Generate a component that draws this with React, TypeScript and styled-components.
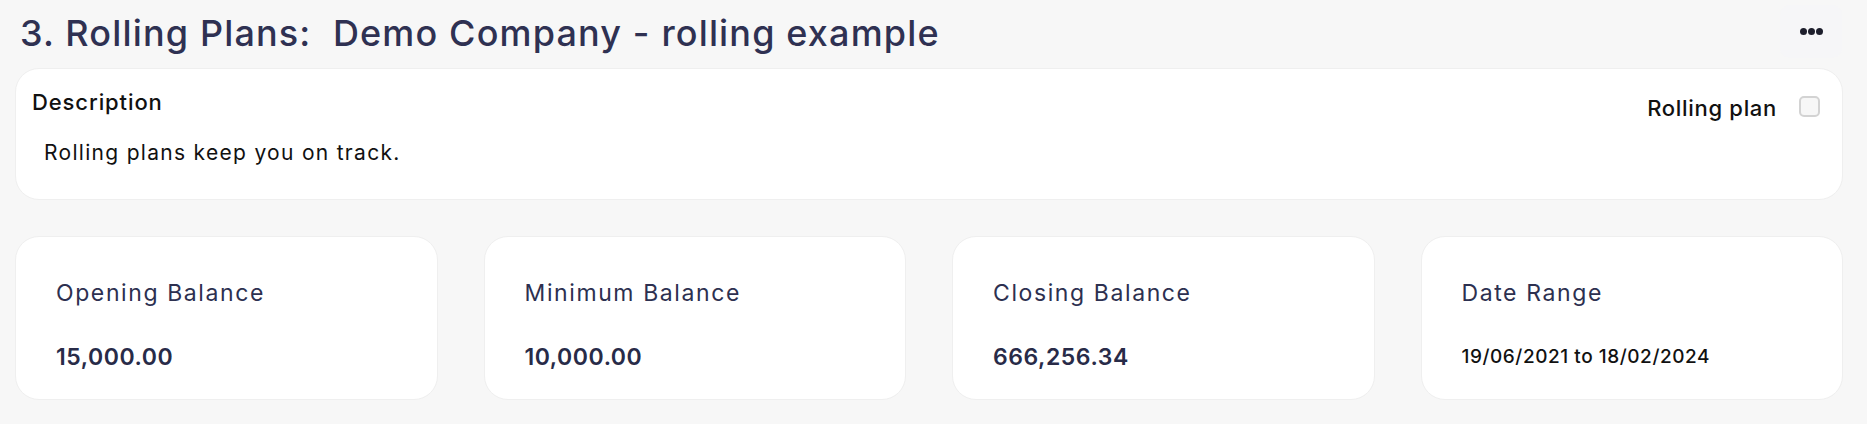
import React from "react";
import styled, { createGlobalStyle } from "styled-components";

const GlobalStyle = createGlobalStyle`
  html, body {
    margin: 0;
    padding: 0;
    background: #f7f7f7;
  }
  body {
    font-family: Inter, "Open Sans", sans-serif;
    -webkit-font-smoothing: antialiased;
  }
`;

const Page = styled.div`
  display: flex;
  flex-direction: column;
  padding: 0 24px 25px 15px;
  box-sizing: border-box;
  width: 1867px;
`;

const Header = styled.div`
  display: flex;
  align-items: center;
  justify-content: space-between;
  height: 68px;
  padding-left: 5px;
`;

const Title = styled.h1`
  margin: 0 0 2px;
  font-size: 36px;
  font-weight: 500;
  color: #2f3152;
  line-height: 44px;
  letter-spacing: 1.15px;
  white-space: pre;
`;

const MenuButton = styled.button`
  width: 62px;
  height: 53px;
  margin-top: -5px;
  margin-right: 1px;
  border: none;
  border-radius: 10px;
  background: #f6f6f8;
  display: flex;
  align-items: center;
  justify-content: center;
  gap: 1px;
  padding: 0;
  cursor: pointer;
`;

const Dot = styled.span`
  width: 7px;
  height: 7px;
  border-radius: 50%;
  background: #1d1e2c;
`;

const Card = styled.div`
  background: #ffffff;
  border: 1px solid #efefef;
  border-radius: 24px;
  box-sizing: border-box;
`;

const DescriptionCard = styled(Card)`
  height: 132px;
  display: flex;
  justify-content: space-between;
  padding: 17px 22px 0 16px;
`;

const DescriptionBody = styled.div`
  display: flex;
  flex-direction: column;
`;

const DescriptionLabel = styled.div`
  font-size: 22px;
  font-weight: 500;
  color: #111111;
  line-height: 32px;
  letter-spacing: 0.9px;
`;

const DescriptionText = styled.div`
  font-size: 21px;
  font-weight: 400;
  color: #111111;
  line-height: 32px;
  margin-top: 19px;
  padding-left: 12px;
  letter-spacing: 1.3px;
`;

const RollingToggle = styled.label`
  display: flex;
  align-items: center;
  gap: 22px;
  height: 32px;
  margin-top: 6px;
  font-size: 22px;
  font-weight: 500;
  color: #111111;
  letter-spacing: 0.7px;
`;

const CheckBox = styled.span`
  width: 21px;
  height: 21px;
  margin-top: -3px;
  box-sizing: border-box;
  border: 2px solid #d3d3d3;
  border-radius: 5px;
  background: #f7f7f7;
`;

const StatsRow = styled.div`
  display: grid;
  grid-template-columns: repeat(4, 1fr);
  gap: 46px;
  margin-top: 36px;
`;

const StatCard = styled(Card)`
  height: 164px;
  padding: 36px 20px 0 40px;
  display: flex;
  flex-direction: column;
`;

const StatLabel = styled.div`
  font-size: 23px;
  font-weight: 400;
  color: #2d3050;
  line-height: 40px;
  letter-spacing: 1.6px;
`;

const StatValue = styled.div<{ $small?: boolean }>`
  font-size: ${(p) => (p.$small ? "19px" : "23px")};
  font-weight: ${(p) => (p.$small ? 500 : 600)};
  color: ${(p) => (p.$small ? "#111111" : "#282b48")};
  line-height: 40px;
  margin-top: 24px;
  letter-spacing: 0.55px;
`;

const stats = [
  { label: "Opening Balance", value: "15,000.00" },
  { label: "Minimum Balance", value: "10,000.00" },
  { label: "Closing Balance", value: "666,256.34" },
  { label: "Date Range", value: "19/06/2021 to 18/02/2024", small: true },
];

export default function App() {
  return (
    <>
      <GlobalStyle />
      <Page>
        <Header>
          <Title>{"3. Rolling Plans:  Demo Company - rolling example"}</Title>
          <MenuButton aria-label="More options">
            <Dot />
            <Dot />
            <Dot />
          </MenuButton>
        </Header>
        <DescriptionCard>
          <DescriptionBody>
            <DescriptionLabel>Description</DescriptionLabel>
            <DescriptionText>Rolling plans keep you on track.</DescriptionText>
          </DescriptionBody>
          <RollingToggle>
            Rolling plan
            <CheckBox />
          </RollingToggle>
        </DescriptionCard>
        <StatsRow>
          {stats.map((s) => (
            <StatCard key={s.label}>
              <StatLabel>{s.label}</StatLabel>
              <StatValue $small={s.small}>{s.value}</StatValue>
            </StatCard>
          ))}
        </StatsRow>
      </Page>
    </>
  );
}
